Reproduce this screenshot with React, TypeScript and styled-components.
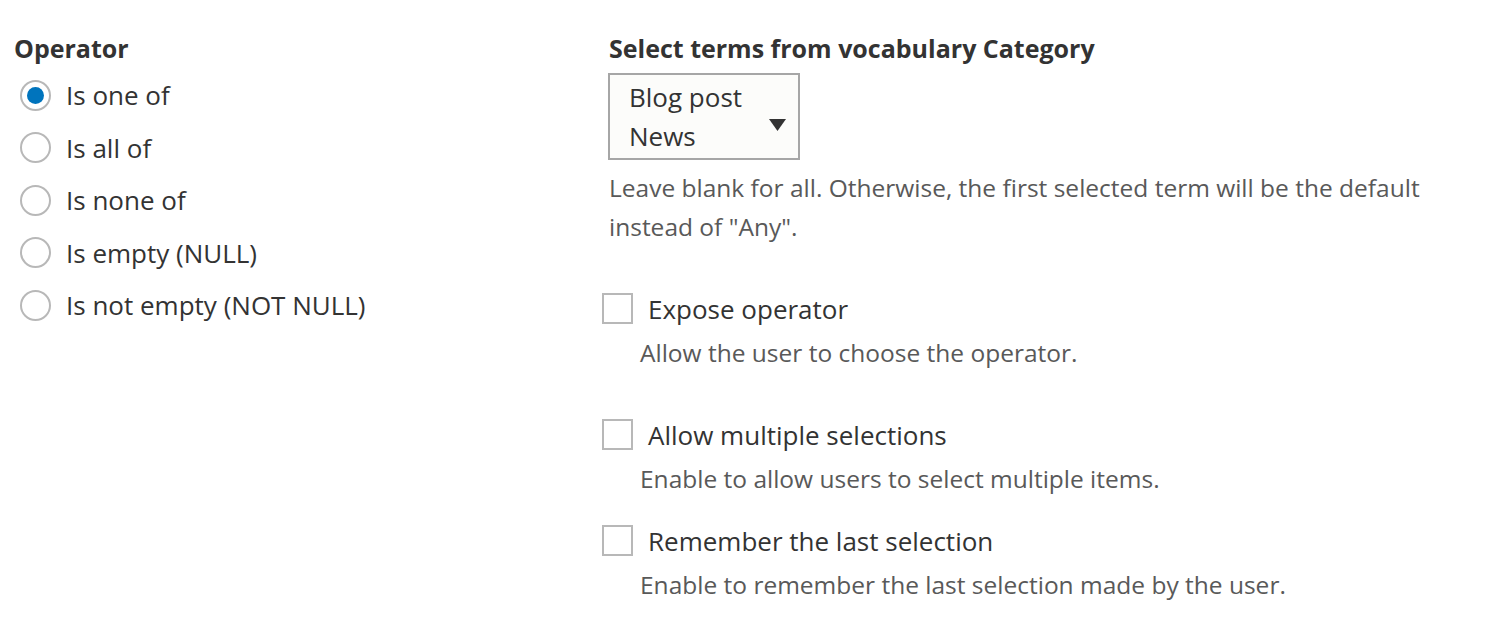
import React from "react";
import styled, { createGlobalStyle } from "styled-components";

const GlobalStyle = createGlobalStyle`
  html, body { margin: 0; padding: 0; background: #ffffff; }
  body { font-family: "Open Sans", "Noto Sans", "Liberation Sans", sans-serif; color: #333333; }
  * { box-sizing: border-box; }
`;

const Page = styled.div`
  display: grid;
  grid-template-columns: 588px 1fr;
  padding: 33px 0 0 14px;
  width: 1500px;
  height: 632px;
`;

const Column = styled.div`
  display: flex;
  flex-direction: column;
`;

const Heading = styled.div<{ $indent?: number }>`
  font-size: 25px;
  font-weight: 700;
  line-height: 30px;
  color: #333333;
  margin-left: ${(p) => p.$indent ?? 0}px;
`;

const RadioList = styled.div`
  display: flex;
  flex-direction: column;
  margin-top: 6px;
`;

const RadioRow = styled.label`
  display: flex;
  align-items: center;
  height: 52.5px;
  padding-left: 6px;
  gap: 15px;
  font-size: 26px;
  line-height: 52px;
  color: #333333;
`;

const RadioInput = styled.input`
  appearance: none;
  margin: 0;
  width: 31px;
  height: 31px;
  border-radius: 50%;
  border: 2px solid #b8b8b8;
  background: #ffffff;
  display: grid;
  place-items: center;
  flex: none;
  &:checked::after {
    content: "";
    width: 17px;
    height: 17px;
    border-radius: 50%;
    background: #0074bd;
  }
`;

const SelectBox = styled.div`
  position: relative;
  margin: 10px 0 0 6px;
  width: 192px;
  height: 87px;
  border: 2px solid #a6a6a6;
  background: #fcfcfa;
  padding: 3px 0 0 19px;
`;

const Option = styled.div`
  font-size: 26px;
  line-height: 39px;
  color: #333333;
`;

const Caret = styled.svg`
  position: absolute;
  right: 12px;
  top: 44px;
`;

const Description = styled.div<{ $indent: number; $top: number }>`
  font-size: 24.5px;
  line-height: 39px;
  color: #595959;
  margin: ${(p) => p.$top}px 0 0 ${(p) => p.$indent}px;
  max-width: 860px;
`;

const CheckItem = styled.div<{ $top: number }>`
  display: flex;
  flex-direction: column;
  margin-top: ${(p) => p.$top}px;
`;

const CheckRow = styled.label`
  display: flex;
  align-items: flex-start;
  gap: 15px;
  height: 31px;
  font-size: 26px;
  line-height: 31px;
  color: #333333;
`;

const CheckLabel = styled.span`
  padding-top: 1px;
`;

const CheckInput = styled.input`
  appearance: none;
  margin: 0;
  width: 31px;
  height: 31px;
  border: 2px solid #b8b8b8;
  background: #ffffff;
  flex: none;
`;

const operators = [
  "Is one of",
  "Is all of",
  "Is none of",
  "Is empty (NULL)",
  "Is not empty (NOT NULL)",
];

const checks = [
  { label: "Expose operator", desc: "Allow the user to choose the operator.", top: 47 },
  { label: "Allow multiple selections", desc: "Enable to allow users to select multiple items.", top: 47 },
  { label: "Remember the last selection", desc: "Enable to remember the last selection made by the user.", top: 27 },
];

export default function App() {
  return (
    <>
      <GlobalStyle />
      <Page>
        <Column>
          <Heading>Operator</Heading>
          <RadioList>
            {operators.map((op, i) => (
              <RadioRow key={op}>
                <RadioInput type="radio" name="operator" defaultChecked={i === 0} />
                {op}
              </RadioRow>
            ))}
          </RadioList>
        </Column>
        <Column>
          <Heading $indent={7}>Select terms from vocabulary Category</Heading>
          <SelectBox>
            <Option>Blog post</Option>
            <Option>News</Option>
            <Caret width="17" height="12" viewBox="0 0 17 12">
              <path d="M0 0 H17 L8.5 12 Z" fill="#333333" />
            </Caret>
          </SelectBox>
          <Description $indent={7} $top={8}>
            Leave blank for all. Otherwise, the first selected term will be the default instead of "Any".
          </Description>
          {checks.map((c) => (
            <CheckItem key={c.label} $top={c.top}>
              <CheckRow>
                <CheckInput type="checkbox" />
                <CheckLabel>{c.label}</CheckLabel>
              </CheckRow>
              <Description $indent={38} $top={9}>
                {c.desc}
              </Description>
            </CheckItem>
          ))}
        </Column>
      </Page>
    </>
  );
}
